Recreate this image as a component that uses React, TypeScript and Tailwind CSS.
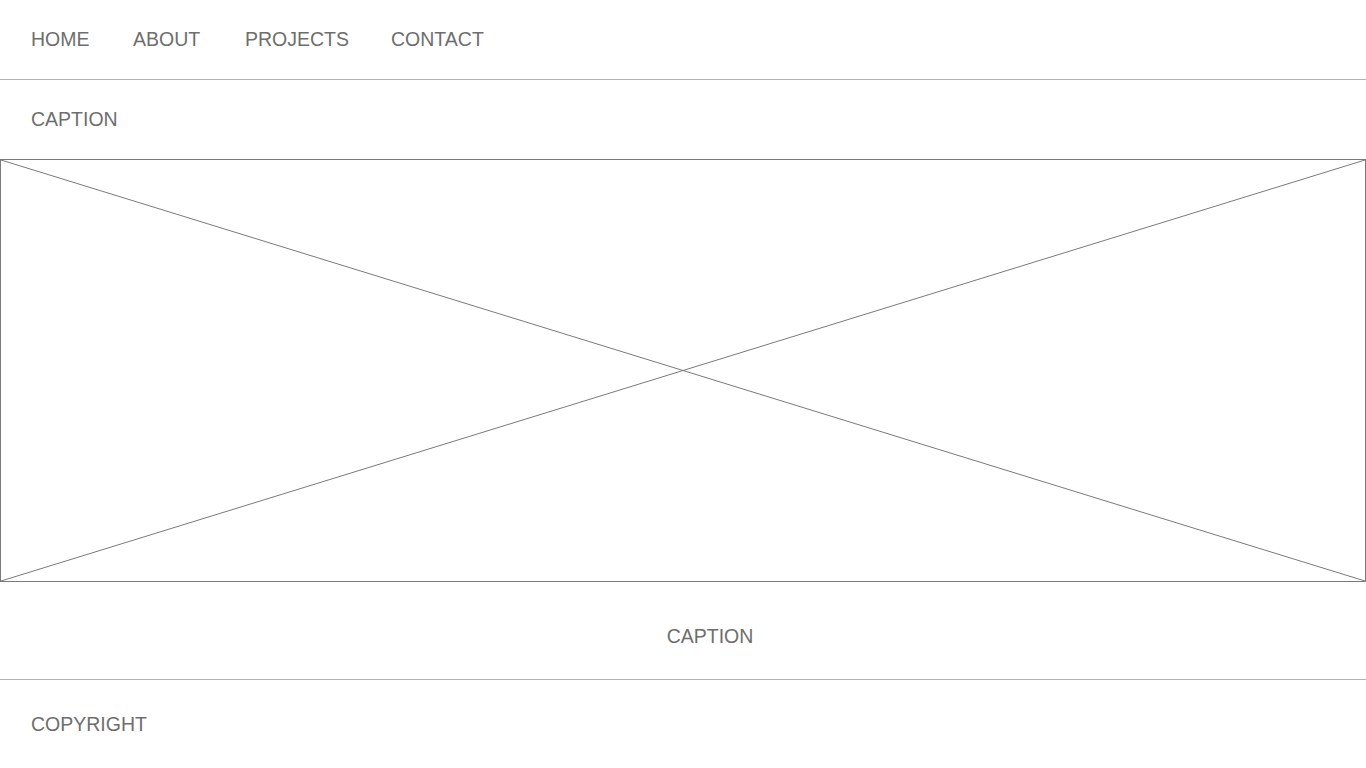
const font = { fontFamily: '"Liberation Sans", Arial, Helvetica, sans-serif' };

export default function App() {
  return (
    <div className="w-[1366px] h-[768px] bg-white text-[#6e6e6e] text-[19.5px] leading-none overflow-hidden" style={font}>
      <nav className="h-[80px] flex items-center px-[31px] border-b border-[#b3b3b3]">
        <span className="w-[102px]">HOME</span>
        <span className="w-[112px]">ABOUT</span>
        <span className="w-[146px]">PROJECTS</span>
        <span>CONTACT</span>
      </nav>
      <div className="h-[79px] flex items-center px-[31px]">CAPTION</div>
      <div className="relative h-[423px] border border-[#7a7a7a]">
        <svg className="absolute inset-0 w-full h-full" preserveAspectRatio="none" viewBox="0 0 100 100">
          <line x1="0" y1="0" x2="100" y2="100" stroke="#7a7a7a" strokeWidth="1" vectorEffect="non-scaling-stroke" />
          <line x1="100" y1="0" x2="0" y2="100" stroke="#7a7a7a" strokeWidth="1" vectorEffect="non-scaling-stroke" />
        </svg>
      </div>
      <div className="h-[98px] flex items-center justify-center pt-[13px] pl-[54px] border-b border-[#b3b3b3]">CAPTION</div>
      <footer className="h-[88px] flex items-center pt-[2px] px-[31px]">COPYRIGHT</footer>
    </div>
  );
}
